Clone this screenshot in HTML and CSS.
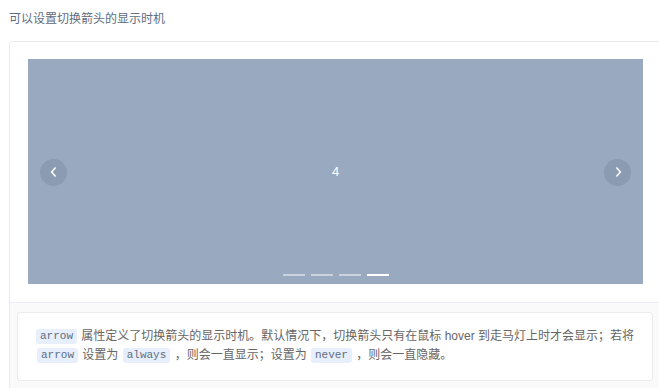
FILE: index.html
```html
<!DOCTYPE html>
<html lang="en">
<head>
    <meta charset="UTF-8">
    <meta name="viewport" content="width=device-width, initial-scale=1.0">
    <title>Carousel arrow</title>
    <link rel="stylesheet" href="styles.css">
</head>
<body>
    <div class="page">
        <p class="hint">可以设置切换箭头的显示时机</p>
        <div class="demo-block">
            <div class="source">
                <div class="carousel">
                    <button class="arrow arrow-left">
                        <svg width="12" height="12" viewBox="0 0 12 12"><path d="M7.6 1.5 L3.6 6 L7.6 10.5" fill="none" stroke="#fff" stroke-width="1.5"/></svg>
                    </button>
                    <h3 class="slide-num">4</h3>
                    <button class="arrow arrow-right">
                        <svg width="12" height="12" viewBox="0 0 12 12"><path d="M4.4 1.5 L8.4 6 L4.4 10.5" fill="none" stroke="#fff" stroke-width="1.5"/></svg>
                    </button>
                    <ul class="indicators">
                        <li><span></span></li>
                        <li><span></span></li>
                        <li><span></span></li>
                        <li class="active"><span></span></li>
                    </ul>
                </div>
            </div>
            <div class="meta">
                <div class="description">
                    <p><code>arrow</code> 属性定义了切换箭头的显示时机。默认情况下，切换箭头只有在鼠标 hover 到走马灯上时才会显示；若将 <code>arrow</code> 设置为 <code>always</code> ，则会一直显示；设置为 <code>never</code> ，则会一直隐藏。</p>
                </div>
            </div>
        </div>
    </div>
</body>
</html>
```

FILE: styles.css
```css
html, body {
    overflow: hidden;
}
body {
    margin: 0;
    font-family: "Liberation Sans", "Noto Sans CJK SC", sans-serif;
    background: #fff;
}
.page {
    padding-left: 9px;
}
.hint {
    margin: 10px 0 13px;
    font-size: 12px;
    line-height: 18px;
    color: #5e6d82;
}
.demo-block {
    width: 653px;
    border: 1px solid #ebebeb;
    border-radius: 3px;
    box-sizing: border-box;
}
.source {
    padding: 17px 18px 18px;
}
.carousel {
    position: relative;
    height: 225px;
    background: #99a9bf;
    display: flex;
    align-items: center;
    justify-content: center;
    overflow: hidden;
}
.slide-num {
    margin: 0;
    font-size: 13px;
    font-weight: normal;
    color: #fff;
}
.arrow {
    position: absolute;
    top: 50%;
    width: 27px;
    height: 27px;
    margin-top: -13px;
    padding: 0;
    border: none;
    border-radius: 50%;
    background: rgba(31, 45, 61, 0.11);
    display: flex;
    align-items: center;
    justify-content: center;
}
.arrow-left {
    left: 12px;
}
.arrow-right {
    right: 12px;
}
.indicators {
    position: absolute;
    left: 0;
    right: 0;
    bottom: 8px;
    margin: 0;
    padding: 0;
    list-style: none;
    display: flex;
    justify-content: center;
    gap: 6px;
}
.indicators li span {
    display: block;
    width: 22px;
    height: 2px;
    background: #fff;
    opacity: 0.48;
}
.indicators li.active span {
    opacity: 1;
}
.meta {
    border-top: 1px solid #eaeefb;
    background: #fafafa;
    padding: 9px 8px 20px 7px;
}
.description {
    background: #fff;
    border: 1px solid #ebebeb;
    border-radius: 3px;
    padding: 14px 17px 15px 18px;
}
.description p {
    margin: 0;
    font-size: 12px;
    line-height: 19px;
    color: #666;
}
.description code {
    display: inline-block;
    height: 15px;
    line-height: 15px;
    padding: 0 4px;
    margin: 0 1px;
    border-radius: 3px;
    background: #e6effb;
    color: #5e6d82;
    font-family: "Liberation Mono", monospace;
    font-size: 11px;
    vertical-align: 1px;
}
.description code:first-child {
    margin-left: 0;
}
```
